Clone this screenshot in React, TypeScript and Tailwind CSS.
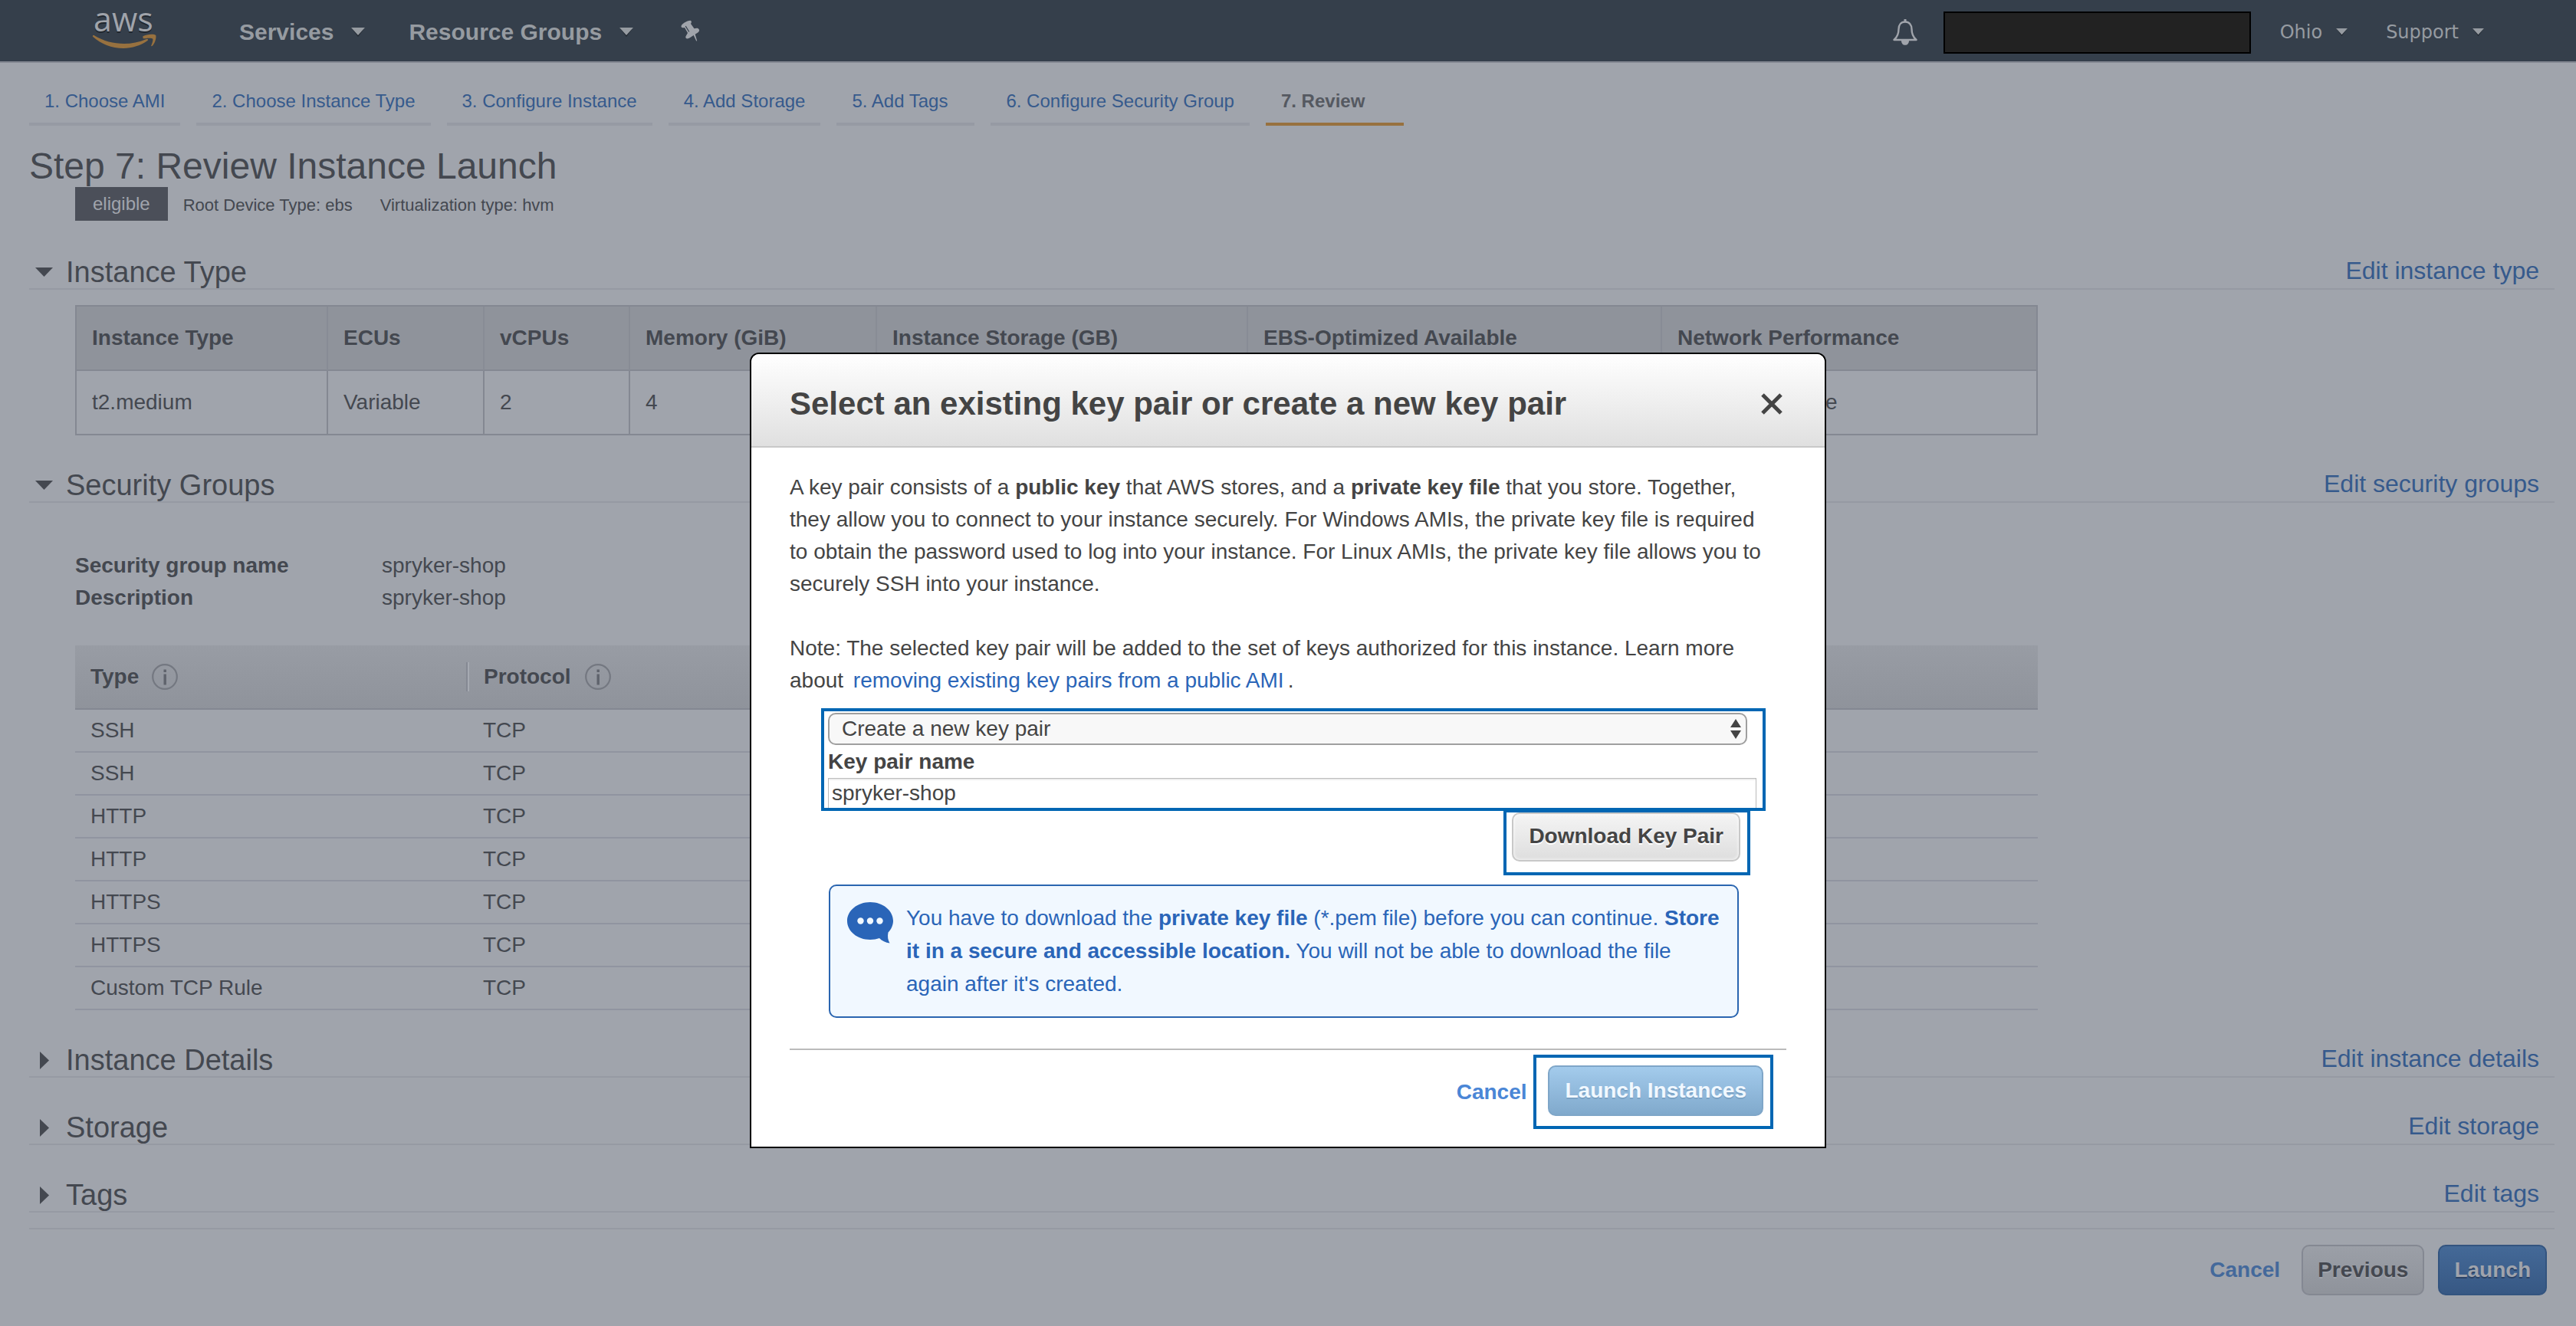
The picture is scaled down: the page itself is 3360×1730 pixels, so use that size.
import React from "react";

const steps = [
  "1. Choose AMI",
  "2. Choose Instance Type",
  "3. Configure Instance",
  "4. Add Storage",
  "5. Add Tags",
  "6. Configure Security Group",
];

const instanceColumns = [
  { title: "Instance Type", value: "t2.medium", width: "w-[326px]" },
  { title: "ECUs", value: "Variable", width: "w-[204px]" },
  { title: "vCPUs", value: "2", width: "w-[190px]" },
  { title: "Memory (GiB)", value: "4", width: "w-[322px]" },
  { title: "Instance Storage (GB)", value: "EBS only", width: "w-[484px]" },
  { title: "EBS-Optimized Available", value: "-", width: "w-[540px]" },
  { title: "Network Performance", value: "Low to Moderate", width: "" },
];

const rules = ["SSH", "SSH", "HTTP", "HTTP", "HTTPS", "HTTPS", "Custom TCP Rule"];

function AwsLogo() {
  return (
    <svg viewBox="0 0 84 70" className="h-[70px] w-[84px] shrink-0" role="img" aria-label="aws">
      <text x="2" y="36" fontFamily="'Open Sans', sans-serif" fontSize="43" fill="#a0a4ab">
        aws
      </text>
      <g transform="translate(0 9)" fill="#97713f">
        <path d="M1 32.500c.6-.7 1.500-.5 2.300 0C15 39.500 28 43 42 43c9.500 0 19.500-2 29-6 1.600-.7 2.900 1 1.400 2.100C64 45.500 52 49 41 49 25.500 49 11.500 43 1.300 34c-.5-.5-.6-1-.3-1.500z" />
        <path d="M66.500 33.300c4.500-3 15-3.300 16.500-1.500 1.400 1.700-.4 10.500-4.600 14.200-.8.7-1.500.3-1.200-.5 1-2.400 2.900-7.500 2-8.800-1-1.300-6.500-.9-9.500-.5-3 .4-3.500-.4-3.200-1.200.1-.7-.5-1.300 0-1.700z" />
      </g>
    </svg>
  );
}

function Caret({ small = false }: { small?: boolean }) {
  return (
    <svg viewBox="0 0 18 12" className={small ? "h-[10px] w-[15px]" : "h-[12px] w-[18px]"} aria-hidden="true">
      <path d="M0 0h18l-9 12z" fill="#1f262e" />
      <path d="M0 0h18l-9 10z" fill="#969ba1" />
    </svg>
  );
}

function PinIcon() {
  return (
    <svg viewBox="0 0 26 28" className="h-[28px] w-[26px]" aria-hidden="true">
      <path
        d="M.5 8.500C.5 5.500 8 1 12.500.8c1.200.2 1.700 1.800 1.200 2.800L13 5l4.500 6.300c2-.5 4-.7 5.200 0 1.200.8 1.700 1.900 1.300 2.900-.3.900-1 1.600-1.800 2.200l-3.500 2.300 2.500 8.500-1 .3-3.500-7.500-4.500 3c-1.500 1-3.300 1.800-4.900 1.300-1.200-.8-1.300-2.100-.6-3.300L9 17l-4-7c-1.300.4-2.600.5-3.300 0C1 9.700.6 9.200.5 8.500z"
        fill="#a0a4ab"
      />
      <path d="M6.500 8.500l4 6.500" stroke="#353f4b" strokeWidth="1.300" strokeLinecap="round" />
    </svg>
  );
}

function BellIcon() {
  return (
    <svg viewBox="0 0 32 34" className="h-[34px] w-[32px]" aria-hidden="true">
      <path
        d="M16 3.500c-5.500 0-8.500 4-8.500 9.500 0 7-2 10.500-6 14h29c-4-3.500-6-7-6-14 0-5.500-3-9.500-8.500-9.500z"
        fill="none"
        stroke="#a0a4ab"
        strokeWidth="2.400"
        strokeLinejoin="round"
      />
      <path d="M14.500 0h3v4h-3zM11 28h10c0 3.500-2 5.800-5 5.800s-5-2.300-5-5.800z" fill="#a0a4ab" />
    </svg>
  );
}

function InfoIcon() {
  return (
    <svg viewBox="0 0 34 34" className="h-[34px] w-[34px]" aria-hidden="true">
      <circle cx="17" cy="17" r="15.800" fill="none" stroke="#747881" strokeWidth="2.200" />
      <path d="M15.500 13.500h3.400v14h-3.400zM15.500 7.500h3.400v3.400h-3.400z" fill="#5f636c" />
    </svg>
  );
}

function Section({
  title,
  edit,
  open = false,
  first = false,
  children,
}: {
  title: string;
  edit: string;
  open?: boolean;
  first?: boolean;
  children?: React.ReactNode;
}) {
  return (
    <section className={first ? "mt-[46px]" : "mt-[44px]"}>
      <div className="flex h-[44px] items-center justify-between border-b-2 border-[#969aa3] pr-5">
        <h2 className="text-[38px] leading-[42px]">
          <button type="button" aria-expanded={open} className="flex items-center">
            <span className="flex w-[48px] pl-2">
              {open ? (
                <svg viewBox="0 0 23 12" className="h-[12px] w-[23px]" aria-hidden="true">
                  <path d="M0 0h23L11.500 12z" fill="#444850" />
                </svg>
              ) : (
                <svg viewBox="0 0 23 23" className="h-[23px] w-[23px]" aria-hidden="true">
                  <path d="M6 0l12 11.500L6 23z" fill="#444850" />
                </svg>
              )}
            </span>
            {title}
          </button>
        </h2>
        <a href="#edit" className="pb-1 text-[32px] leading-[38px] text-[#365a8c]">
          {edit}
        </a>
      </div>
      {children}
    </section>
  );
}

function InstanceTable() {
  return (
    <div className="mr-[674px] ml-[60px] mt-5">
      <table className="w-full table-fixed border-separate border-spacing-0 border-2 border-[#848892] text-left">
        <thead>
          <tr className="h-[84px] bg-[#8f939b]">
            {instanceColumns.map((c) => (
              <th
                key={c.title}
                className={`${c.width} border-b-2 border-l-2 border-b-[#848892] border-l-[#888c95] py-0 pl-5 font-bold whitespace-nowrap first:border-l-0`}
              >
                {c.title}
              </th>
            ))}
          </tr>
        </thead>
        <tbody>
          <tr className="h-[82px]">
            {instanceColumns.map((c) => (
              <td key={c.title} className="border-l-2 border-[#848892] py-0 pl-5 first:border-l-0">
                {c.value}
              </td>
            ))}
          </tr>
        </tbody>
      </table>
    </div>
  );
}

function SecurityGroups() {
  return (
    <div className="mr-[674px] ml-[60px]">
      <dl className="mt-[61px] mb-[41px] grid grid-cols-[400px_1fr] leading-[42px]">
        <dt className="font-bold">Security group name</dt>
        <dd>spryker-shop</dd>
        <dt className="font-bold">Description</dt>
        <dd>spryker-shop</dd>
      </dl>
      <table className="w-full table-fixed border-separate border-spacing-0 text-left">
        <thead>
          <tr className="h-[84px] bg-linear-to-b from-[#989ca4] to-[#8f939b]">
            <th className="w-[510px] border-b-2 border-[#848892] py-0 pl-5">
              <span className="flex items-center gap-[17px]">
                Type <InfoIcon />
              </span>
            </th>
            <th className="border-b-2 border-[#848892] p-0">
              <span className="flex h-[38px] items-center gap-[18px] border-l-2 border-[#858993] pl-[21px] shadow-[inset_2px_0_0_#a6aab2]">
                Protocol <InfoIcon />
              </span>
            </th>
          </tr>
        </thead>
        <tbody>
          {rules.map((r, i) => (
            <tr key={i} className="h-[56px]">
              <td className="border-b-2 border-[#9094a0] py-0 pl-5">{r}</td>
              <td className="border-b-2 border-[#9094a0] py-0 pl-[22px]">TCP</td>
            </tr>
          ))}
        </tbody>
      </table>
    </div>
  );
}

function KeyPairDialog() {
  return (
    <div
      role="dialog"
      aria-labelledby="dialog-title"
      className="w-[1404px] max-w-full rounded-t-xl border-2 border-black bg-white text-[#444]"
    >
      <div className="flex h-[122px] items-center justify-between rounded-t-[10px] border-b-2 border-[#c8c8c8] bg-linear-to-b from-white to-[#e0e0e0] pt-[10px] pr-[54px] pl-[50px]">
        <h2 id="dialog-title" className="text-[42px] leading-[50px] font-bold">
          Select an existing key pair or create a new key pair
        </h2>
        <button type="button" aria-label="Close">
          <svg viewBox="0 0 30 30" className="h-[30px] w-[30px]" aria-hidden="true">
            <path d="M3 3l24 24M27 3L3 27" stroke="#444" strokeWidth="5" />
          </svg>
        </button>
      </div>

      <div className="flex flex-col px-[50px] pt-[31px] pb-[23px]">
        <p className="pr-5 leading-[42px]">
          A key pair consists of a <b>public key</b> that AWS stores, and a <b>private key file</b> that you store.
          Together, they allow you to connect to your instance securely. For Windows AMIs, the private key file is
          required to obtain the password used to log into your instance. For Linux AMIs, the private key file allows
          you to securely SSH into your instance.
        </p>
        <p className="mt-[42px] leading-[42px]">
          Note: The selected key pair will be added to the set of keys authorized for this instance. Learn more about{" "}
          <a href="#learn" className="mx-[5px] text-[#2a65b8]">
            removing existing key pairs from a public AMI
          </a>
          .
        </p>

        <div className="relative mt-[15px] mr-[27px] ml-[41px] flex flex-col border-4 border-[#0066b3] px-[5px] pt-0.5">
          <div className="relative mr-[15px]">
            <select
              aria-label="Key pair"
              className="block h-[42px] w-full appearance-none rounded-[10px] border-2 border-[#9f9f9f] bg-[#f8f8f8] pl-4 text-[28px] leading-[38px]"
            >
              <option>Create a new key pair</option>
            </select>
            <svg
              viewBox="0 0 14 26"
              className="pointer-events-none absolute top-2 right-2 h-[26px] w-[14px]"
              aria-hidden="true"
            >
              <path d="M7 0l7 11H0zM7 26l7-11H0z" fill="#444" />
            </svg>
          </div>
          <label htmlFor="key-name" className="leading-[43px] font-bold">
            Key pair name
          </label>
          <input
            id="key-name"
            defaultValue="spryker-shop"
            className="mr-[3px] h-[39px] border border-b-0 border-[#bbb] pl-1 text-[28px] leading-[38px] shadow-[inset_0_2px_0_#eee] outline-none"
          />
        </div>
        <div className="-mt-0.5 mr-[47px] self-end border-4 border-[#0066b3] pr-[9px] pb-[14px] pl-[7px]">
          <button
            type="button"
            className="flex h-[64px] items-center rounded-[10px] border-2 border-[#c8c8c8] bg-linear-to-b from-[#f4f4f4] to-[#dedede] px-5 pb-0.5 font-bold shadow-[inset_0_0_4px_#fff] [text-shadow:0_2px_0_#fff]"
          >
            Download Key Pair
          </button>
        </div>

        <div className="mt-3 mr-[62px] ml-[51px] flex rounded-[10px] border-2 border-[#2a65b0] bg-[#f1f8ff] pt-5 pr-[18px] pb-[21px] pl-[21px] text-[#2a65b8]">
          <svg viewBox="0 0 62 56" className="h-[56px] w-[62px] shrink-0" aria-hidden="true">
            <path
              d="M31 1C14.400 1 1 12 1 25.500S14.400 50 31 50c4.500 0 8.500-.7 12-2 3.500 3.500 8 5.700 13.500 6.500-2.500-4-3-9-2-14 4-4 6.500-9.500 6.500-15C61 12 47.600 1 31 1z"
              fill="#2a65b8"
            />
            <circle cx="18.500" cy="25.500" r="4.200" fill="#f1f8ff" />
            <circle cx="31" cy="25.500" r="4.200" fill="#f1f8ff" />
            <circle cx="43.500" cy="25.500" r="4.200" fill="#f1f8ff" />
          </svg>
          <p className="ml-4 leading-[43px]">
            You have to download the <b>private key file</b> (*.pem file) before you can continue.{" "}
            <b>Store it in a secure and accessible location.</b> You will not be able to download the file again after
            it's created.
          </p>
        </div>

        <div className="mt-10 flex items-center justify-end gap-[9px] border-t-2 border-[#bbb] pt-[6px] pr-[17px]">
          <a href="#cancel" className="font-bold text-[#4a86d6]">
            Cancel
          </a>
          <div className="border-4 border-[#0066b3] pt-[10px] pr-[9px] pb-[13px] pl-[15px]">
            <button
              type="button"
              className="flex h-[66px] items-center rounded-[10px] border-2 border-[#7fa6c8] bg-linear-to-b from-[#a3cbec] to-[#80a9cc] px-5 font-bold text-[#f1f8ff] [text-shadow:0_2px_0_#7ba2c4]"
            >
              Launch Instances
            </button>
          </div>
        </div>
      </div>
    </div>
  );
}

export default function App() {
  return (
    <div className="relative min-h-screen bg-[#a0a4ac] font-['Liberation_Sans',Arial,sans-serif] text-[28px] leading-[34px] text-[#444850]">
      <header className="flex h-[82px] items-center border-b-2 border-[#848892] bg-[#353f4b] pr-[120px] pl-[120px] text-[#969ba1] [text-shadow:0_2px_0_#1f262e]">
        <AwsLogo />
        <nav className="ml-[108px] flex items-center pt-1 text-[30px] font-bold">
          <button type="button" className="flex items-center gap-[23px]">
            Services <Caret />
          </button>
          <button type="button" className="ml-[57px] flex items-center gap-[23px]">
            Resource Groups <Caret />
          </button>
          <button type="button" aria-label="Pin shortcuts" className="ml-[62px] pb-1">
            <PinIcon />
          </button>
        </nav>
        <div className="ml-auto flex items-center pt-1 font-['DejaVu_Sans',sans-serif] text-[24px]">
          <button type="button" aria-label="Notifications">
            <BellIcon />
          </button>
          <div className="ml-[34px] h-[55px] w-[401px] border-2 border-black bg-[#222]" />
          <button type="button" className="ml-[38px] flex items-center gap-[18px]">
            Ohio <Caret small />
          </button>
          <button type="button" className="ml-[50px] flex items-center gap-[18px]">
            Support <Caret small />
          </button>
        </div>
      </header>

      <main className="pt-[34px] pr-[28px] pl-[38px]">
        <nav className="flex gap-[21px] text-[24px] leading-8 whitespace-nowrap" aria-label="Steps">
          {steps.map((s) => (
            <a key={s} href="#step" className="min-w-[180px] border-b-4 border-[#969aa3] px-5 pb-3 text-[#365a8c]">
              {s}
            </a>
          ))}
          <span aria-current="step" className="min-w-[180px] border-b-4 border-[#97713f] px-5 pb-3 font-bold text-[#555961]">
            7. Review
          </span>
        </nav>

        <h1 className="mt-[26px] text-[48px] leading-[54px]">Step 7: Review Instance Launch</h1>
        <div className="ml-[60px] flex h-[44px] items-center text-[22px]">
          <span className="flex h-full items-center bg-[#4b4f59] px-[23px] text-[24px] text-[#a0a4ac]">eligible</span>
          <span className="ml-5 pt-1">Root Device Type: ebs</span>
          <span className="ml-9 pt-1">Virtualization type: hvm</span>
        </div>

        <Section title="Instance Type" edit="Edit instance type" open first>
          <InstanceTable />
        </Section>
        <Section title="Security Groups" edit="Edit security groups" open>
          <SecurityGroups />
        </Section>
        <Section title="Instance Details" edit="Edit instance details" />
        <Section title="Storage" edit="Edit storage" />
        <Section title="Tags" edit="Edit tags" />

        <footer className="mt-5 flex items-center justify-end border-t-2 border-[#969aa3] pt-5 pr-[10px] font-bold">
          <a href="#cancel" className="text-[#44699b]">
            Cancel
          </a>
          <button
            type="button"
            className="ml-[28px] h-[66px] rounded-[10px] border-2 border-[#848892] bg-linear-to-b from-[#9b9fa7] to-[#8f939b] px-[19px] [text-shadow:0_2px_0_#a0a4ac]"
          >
            Previous
          </button>
          <button
            type="button"
            className="ml-[18px] h-[66px] rounded-[10px] border-2 border-[#33547f] bg-linear-to-b from-[#446997] to-[#375884] px-[19px] text-[#a0a4ac] [text-shadow:0_2px_0_#2c4366]"
          >
            Launch
          </button>
        </footer>
      </main>

      <div className="absolute inset-x-0 top-[460px] flex justify-center">
        <KeyPairDialog />
      </div>
    </div>
  );
}
